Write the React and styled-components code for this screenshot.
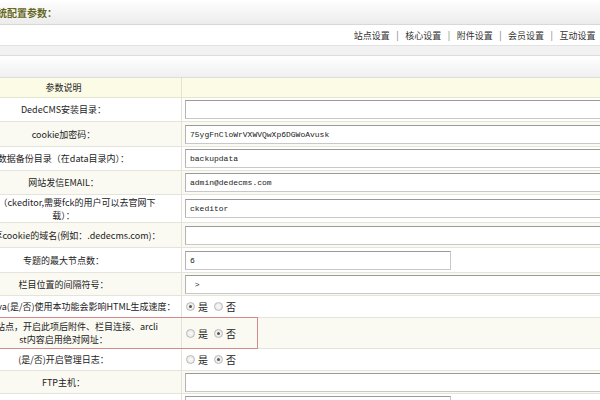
import React from "react";
import styled, { createGlobalStyle } from "styled-components";

const Global = createGlobalStyle`
  html, body { margin: 0; padding: 0; background: #fff; overflow: hidden; }
  body { font-family: "Noto Sans CJK SC", "Liberation Sans", sans-serif; font-size: 9px; color: #222; }
`;

const Page = styled.div`
  margin-left: -54px;
  width: 720px;
`;

const TitleBar = styled.div`
  height: 24px;
  background: linear-gradient(#ffffff, #ececec);
  border-bottom: 1px solid #d8d8d8;
  display: flex;
  align-items: center;
  padding-left: 41px;
  font-family: "Noto Sans CJK SC", sans-serif;
  font-size: 10px;
  font-weight: bold;
  color: #66661a;
`;

const NavRow = styled.div`
  height: 20px;
  border-bottom: 1px solid #e2e2e2;
  display: flex;
  align-items: center;
  justify-content: flex-end;
  padding-right: 19px;
  font-family: "Noto Sans CJK SC", sans-serif;
  font-size: 9px;
  color: #333;
`;

const NavLink = styled.span`
  color: #333;
`;

const NavSep = styled.span`
  color: #777;
  padding: 0 6.5px;
`;

const GrayBar = styled.div`
  height: 9px;
  background: #f2f2f2;
  border-bottom: 1px solid #dedede;
`;

const SubBar = styled.div`
  height: 21px;
  background: linear-gradient(#ffffff, #f0f0f0);
  border-bottom: 1px solid #dcdcdc;
`;

const Row = styled.div`
  position: relative;
  display: grid;
  grid-template-columns: 236px 1fr;
  height: ${(p) => p.$h}px;
  box-sizing: border-box;
  border-bottom: 1px solid #e4e4da;
  background: ${(p) => (p.$alt ? "#fafaf2" : "#ffffff")};
`;

const HeadRow = styled(Row)`
  background: #fbfbe6;
  border-bottom: 1px solid #e6e6cf;
`;

const Label = styled.div`
  border-right: 1px solid #e2e2d6;
  display: flex;
  align-items: center;
  justify-content: center;
  text-align: center;
  padding: 0 22px;
  line-height: 13px;
  font-size: 9px;
  color: #222;
  word-break: break-all;
  white-space: ${(p) => (p.$nowrap ? "nowrap" : "normal")};
`;

const Value = styled.div`
  display: flex;
  align-items: center;
  padding-left: 3px;
`;

const TextInput = styled.div`
  box-sizing: border-box;
  height: 19px;
  width: ${(p) => (p.$short ? "266px" : "100%")};
  border: 1px solid #c8c8c8;
  border-top-color: #9a9a9a;
  border-left-color: #b4b4b4;
  background: #fff;
  display: flex;
  align-items: center;
  padding-left: 4px;
  font-family: "Liberation Mono", monospace;
  font-size: 8px;
  color: #222;
  white-space: pre;
`;

const RadioGroup = styled.div`
  display: flex;
  align-items: center;
  gap: 6px;
  padding-left: 1px;
`;

const RadioItem = styled.label`
  display: flex;
  align-items: center;
  gap: 3px;
  font-family: "Noto Sans CJK SC", sans-serif;
  font-size: 10px;
  color: #222;
`;

const RadioDot = styled.span`
  width: 9px;
  height: 9px;
  border-radius: 50%;
  box-sizing: border-box;
  border: 1px solid #b8b8b8;
  background: radial-gradient(circle, #fafafa 0%, #e4e4e4 100%);
  display: flex;
  align-items: center;
  justify-content: center;
  &::after {
    content: "";
    width: 3px;
    height: 3px;
    border-radius: 50%;
    background: ${(p) => (p.$on ? "#555" : "transparent")};
  }
`;

const Highlight = styled.div`
  position: absolute;
  left: 0;
  top: -1px;
  width: 312px;
  height: 32px;
  box-sizing: border-box;
  border: 1px solid #d48a8a;
  pointer-events: none;
`;

const rows = [
  { label: "DedeCMS安装目录：", h: 24, input: "" },
  { label: "cookie加密码：", h: 25, input: "75ygFnCloWrVXWVQwXp6DGWoAvusk" },
  { label: "数据备份目录（在data目录内）：", h: 24, input: "backupdata" },
  { label: "网站发信EMAIL：", h: 24, input: "admin@dedecms.com" },
  { label: "编辑器（ckeditor,需要fck的用户可以去官网下载）：", h: 28, input: "ckeditor" },
  { label: "跨域共享cookie的域名(例如：.dedecms.com)：", h: 25, input: "", nowrap: true },
  { label: "专题的最大节点数：", h: 25, input: "6", short: true },
  { label: "栏目位置的间隔符号：", h: 23, input: " > " },
  { label: "是否启用Java(是/否)使用本功能会影响HTML生成速度：", h: 22, radio: true, on: 0, nowrap: true },
  { label: "支持多站点，开启此项后附件、栏目连接、arclist内容启用绝对网址：", h: 31, radio: true, on: 1, mark: true },
  { label: "(是/否)开启管理日志：", h: 22, radio: true, on: 1 },
  { label: "FTP主机：", h: 23, input: "" },
  { label: "FTP端口：", h: 24, input: "21", short: true },
];

function Radios({ on }) {
  return (
    <RadioGroup>
      <RadioItem>
        <RadioDot $on={on === 0} />是
      </RadioItem>
      <RadioItem>
        <RadioDot $on={on === 1} />否
      </RadioItem>
    </RadioGroup>
  );
}

export default function App() {
  return (
    <>
      <Global />
      <Page>
        <TitleBar>系统配置参数：</TitleBar>
        <NavRow>
          <NavLink>站点设置</NavLink>
          <NavSep>|</NavSep>
          <NavLink>核心设置</NavLink>
          <NavSep>|</NavSep>
          <NavLink>附件设置</NavLink>
          <NavSep>|</NavSep>
          <NavLink>会员设置</NavLink>
          <NavSep>|</NavSep>
          <NavLink>互动设置</NavLink>
          <NavSep>|</NavSep>
          <NavLink>性能选项</NavLink>
        </NavRow>
        <GrayBar />
        <SubBar />
        <HeadRow $h={20}>
          <Label>参数说明</Label>
          <Value />
        </HeadRow>
        {rows.map((r, i) => (
          <Row key={i} $h={r.h} $alt={i % 2 === 1}>
            <Label $nowrap={r.nowrap}>{r.label}</Label>
            <Value>
              {r.radio ? <Radios on={r.on} /> : <TextInput $short={r.short}>{r.input}</TextInput>}
            </Value>
            {r.mark && <Highlight />}
          </Row>
        ))}
      </Page>
    </>
  );
}
